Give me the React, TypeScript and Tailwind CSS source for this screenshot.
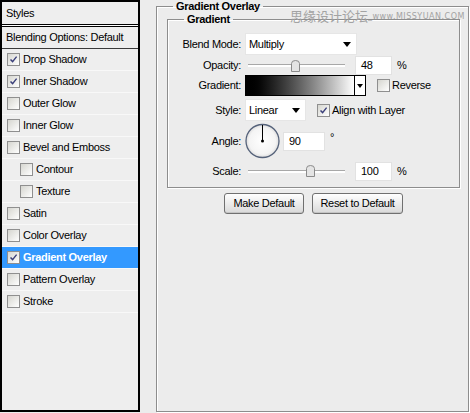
import React from 'react';

const rows = [
  { label: 'Drop Shadow', on: true },
  { label: 'Inner Shadow', on: true },
  { label: 'Outer Glow' },
  { label: 'Inner Glow' },
  { label: 'Bevel and Emboss' },
  { label: 'Contour', sub: true },
  { label: 'Texture', sub: true },
  { label: 'Satin' },
  { label: 'Color Overlay' },
  { label: 'Gradient Overlay', on: true, sel: true },
  { label: 'Pattern Overlay' },
  { label: 'Stroke' },
];

function Check({ on }: { on?: boolean }) {
  return (
    <span className="w-[13px] h-[13px] border border-[#8f8f8f] bg-gradient-to-br from-[#d6d6d0] to-white flex items-center justify-center shrink-0">
      {on && (
        <svg width="9" height="9" viewBox="0 0 9 9">
          <path d="M1.5 4.4 L3.6 6.6 L7.6 1.6" stroke="#3a3f7a" strokeWidth="1.4" fill="none" />
        </svg>
      )}
    </span>
  );
}

function Arrow() {
  return (
    <svg width="8" height="5" viewBox="0 0 8 5">
      <path d="M0 0 H8 L4 5 Z" fill="#000" />
    </svg>
  );
}

function Slider({ pos }: { pos: number }) {
  return (
    <div className="relative w-[97px] h-[18px] ml-[3px] flex items-center">
      <div className="w-full h-[3px] border-t border-[#a8a8a8] bg-white" />
      <div className="absolute top-[3px] w-[9px] h-[12px]" style={{ left: pos - 4 }}>
        <svg width="9" height="12" viewBox="0 0 9 12">
          <path d="M0.5 11.5 V3.5 Q0.5 0.5 4.5 0.5 Q8.5 0.5 8.5 3.5 V11.5 Z" fill="#e4e4e4" stroke="#8a8a8a" />
        </svg>
      </div>
    </div>
  );
}

function Label({ children }: { children: React.ReactNode }) {
  return <div className="w-[73px] text-right shrink-0 mr-[4px]">{children}</div>;
}

function Input({ value, w }: { value: string; w: number }) {
  return (
    <div className="h-[19px] bg-white border border-[#e2e2e2] flex items-center pl-[5px]" style={{ width: w }}>
      {value}
    </div>
  );
}

function Button({ children, w }: { children: React.ReactNode; w: number }) {
  return (
    <div
      className="h-[21px] rounded-[3px] border border-[#707070] bg-gradient-to-b from-white to-[#d9d9d9] flex items-center justify-center shadow-[inset_0_-1px_0_#c4c4c4]"
      style={{ width: w }}
    >
      {children}
    </div>
  );
}

export default function App() {
  return (
    <div className="relative w-[470px] h-[413px] bg-[#ececec] flex text-[11px] tracking-[-0.3px] text-black font-['Liberation_Sans',Arial,sans-serif] overflow-hidden">
      {/* Styles list */}
      <div className="w-[140px] h-[412px] border-2 border-black flex flex-col shrink-0 bg-[#eeeeee]">
        <div className="h-[22px] flex items-center pl-[4px]">Styles</div>
        <div className="h-[3px] border-y border-black bg-white" />
        <div className="h-[22px] flex items-center pl-[4px] border-b border-[#3a3a3a]">Blending Options: Default</div>
        {rows.map((r) => (
          <div
            key={r.label}
            className={`h-[22px] flex items-center gap-[3px] border-b border-[#f8f8f8] ${r.sub ? 'pl-[18px]' : 'pl-[5px]'} ${
              r.sel ? 'bg-[#3399ff] text-white font-bold' : ''
            }`}
          >
            <Check on={r.on} />
            <span>{r.label}</span>
          </div>
        ))}
      </div>

      {/* Right pane */}
      <div className="flex-1 pl-[16px] pr-[1px]">
        <fieldset className="h-[412px] border border-[#8d8d8d] shadow-[1px_1px_0_#fff,inset_1px_1px_0_#fff] pl-[10px] pr-[8px] flex flex-col">
          <legend className="ml-[6px] px-[3px] font-bold leading-[13px]">Gradient Overlay</legend>
          <fieldset className="border border-[#8d8d8d] shadow-[1px_1px_0_#fff,inset_1px_1px_0_#fff] pt-[7px] pb-[7px] flex flex-col">
            <legend className="ml-[16px] px-[3px] font-bold leading-[13px] mt-[1px]">Gradient</legend>

            <div className="h-[22px] flex items-center">
              <Label>Blend Mode:</Label>
              <div className="w-[112px] h-[22px] bg-white border border-[#e6e6e6] flex items-center justify-between pl-[3px] pr-[5px]">
                <span>Multiply</span>
                <Arrow />
              </div>
            </div>

            <div className="h-[19px] mt-[1px] flex items-center">
              <Label>Opacity:</Label>
              <Slider pos={47} />
              <div className="ml-[10px]">
                <Input value="48" w={37} />
              </div>
              <span className="ml-[5px]">%</span>
            </div>

            <div className="h-[21px] flex items-center">
              <Label>Gradient:</Label>
              <div className="h-[21px] w-[110px] border border-black bg-gradient-to-r from-black to-white" />
              <div className="h-[21px] w-[11px] border border-l-0 border-black bg-white flex items-center justify-center">
                <svg width="6" height="4" viewBox="0 0 6 4">
                  <path d="M0 0 H6 L3 4 Z" fill="#000" />
                </svg>
              </div>
              <div className="ml-[11px] flex items-center gap-[2px]">
                <Check />
                <span>Reverse</span>
              </div>
            </div>

            <div className="h-[22px] mt-[3px] flex items-center">
              <Label>Style:</Label>
              <div className="w-[61px] h-[22px] bg-white border border-[#e6e6e6] flex items-center justify-between pl-[3px] pr-[5px]">
                <span>Linear</span>
                <Arrow />
              </div>
              <div className="ml-[11px] flex items-center gap-[2px]">
                <Check on />
                <span>Align with Layer</span>
              </div>
            </div>

            <div className="h-[36px] mt-[2px] flex items-center">
              <Label>Angle:</Label>
              <svg width="36" height="36" viewBox="0 0 36 36" className="shrink-0">
                <defs>
                  <radialGradient id="dial" cx="50%" cy="50%" r="50%">
                    <stop offset="0%" stopColor="#ffffff" />
                    <stop offset="80%" stopColor="#f4f4f4" />
                    <stop offset="100%" stopColor="#dcdcdc" />
                  </radialGradient>
                </defs>
                <circle cx="17.5" cy="18" r="16.5" fill="url(#dial)" stroke="#55627a" strokeWidth="1.3" />
                <line x1="17.5" y1="18" x2="17.5" y2="2" stroke="#000" strokeWidth="1" />
                <circle cx="17.5" cy="18" r="1.5" fill="#000" />
              </svg>
              <div className="ml-[2px]">
                <Input value="90" w={42} />
              </div>
              <span className="ml-[5px] -mt-[8px]">°</span>
            </div>

            <div className="h-[18px] mt-[3px] flex items-center">
              <Label>Scale:</Label>
              <Slider pos={62} />
              <div className="ml-[10px]">
                <Input value="100" w={37} />
              </div>
              <span className="ml-[5px]">%</span>
            </div>
          </fieldset>

          <div className="mt-[5px] flex justify-center gap-[8px]">
            <Button w={80}>Make Default</Button>
            <Button w={91}>Reset to Default</Button>
          </div>
        </fieldset>
      </div>

      {/* watermark */}
      <div className="absolute left-[290px] top-[9px] flex items-end text-[#a3a3a3] leading-none tracking-normal">
        <span className="text-[13px] font-['Noto_Sans_CJK_SC',sans-serif]">思缘设计论坛</span>
        <span className="text-[8px] tracking-[0.5px] font-['DejaVu_Sans',sans-serif] pb-[1px]">_www.MISSYUAN.COM</span>
      </div>
    </div>
  );
}
